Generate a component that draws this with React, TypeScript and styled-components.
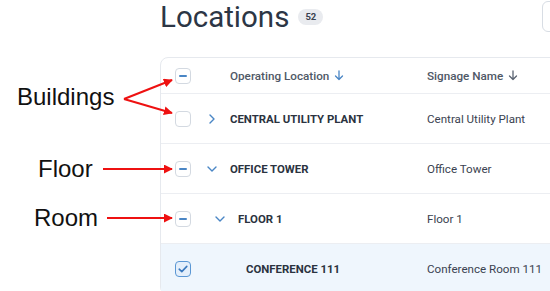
import React from "react";
import styled, { createGlobalStyle } from "styled-components";

interface LocationRow {
  id: string;
  name: string;
  signage: string;
  level: number;
  expander?: "open" | "closed";
  check: "none" | "partial" | "checked";
}

const rows: LocationRow[] = [
  { id: "cup", name: "Central Utility Plant", signage: "Central Utility Plant", level: 0, expander: "closed", check: "none" },
  { id: "ot", name: "Office Tower", signage: "Office Tower", level: 0, expander: "open", check: "partial" },
  { id: "f1", name: "Floor 1", signage: "Floor 1", level: 1, expander: "open", check: "partial" },
  { id: "c111", name: "Conference 111", signage: "Conference Room 111", level: 2, check: "checked" },
];

const GlobalStyle = createGlobalStyle`
  html, body {
    margin: 0;
    padding: 0;
    background: #ffffff;
    overflow: hidden;
  }
  body {
    font-family: Roboto, "Liberation Sans", sans-serif;
  }
`;

const Checkbox = ({ state }: { state: LocationRow["check"] }) => (
  <Box $checked={state === "checked"}>
    {state === "partial" && <Dash />}
    {state === "checked" && (
      <svg width="10" height="8" viewBox="0 0 10 8">
        <path d="M1.2 4.2 L3.8 6.6 L8.8 1.4" fill="none" stroke="#3a78bd" strokeWidth="1.6" strokeLinecap="round" strokeLinejoin="round" />
      </svg>
    )}
  </Box>
);

const Chevron = ({ open }: { open: boolean }) =>
  open ? (
    <svg width="10" height="6" viewBox="0 0 10 6">
      <path d="M1 1 L5 5 L9 1" fill="none" stroke="#4a86c5" strokeWidth="1.4" strokeLinecap="round" strokeLinejoin="round" />
    </svg>
  ) : (
    <svg width="6" height="10" viewBox="0 0 6 10">
      <path d="M1 1 L5 5 L1 9" fill="none" stroke="#4a86c5" strokeWidth="1.4" strokeLinecap="round" strokeLinejoin="round" />
    </svg>
  );

const SortArrow = ({ color }: { color: string }) => (
  <svg width="10" height="11" viewBox="0 0 10 11">
    <path d="M5 1 V9.5 M1.5 6 L5 9.5 L8.5 6" fill="none" stroke={color} strokeWidth="1.3" strokeLinecap="round" strokeLinejoin="round" />
  </svg>
);

const App = () => {
  return (
    <>
      <GlobalStyle />
      <Page>
        <Notes>
          <Note $top={83}>Buildings</Note>
          <Note $top={44} $indent={21}>Floor</Note>
          <Note $top={21} $indent={17}>Room</Note>
        </Notes>
        <Main>
          <TitleBar>
            <Title>Locations</Title>
            <Count>52</Count>
            <ToolButton />
          </TitleBar>
          <Card>
            <HeaderRow>
              <Checkbox state="partial" />
              <NameCell $level={0}>
                <ExpanderSlot />
                <HeadLabel $indent>
                  Operating Location <SortArrow color="#4a86c5" />
                </HeadLabel>
              </NameCell>
              <HeadLabel>
                Signage Name <SortArrow color="#5b6472" />
              </HeadLabel>
            </HeaderRow>
            {rows.map((row) => (
              <BodyRow key={row.id} $selected={row.check === "checked"}>
                <Checkbox state={row.check} />
                <NameCell $level={row.level}>
                  <ExpanderSlot>{row.expander && <Chevron open={row.expander === "open"} />}</ExpanderSlot>
                  <NameText>{row.name}</NameText>
                </NameCell>
                <SignageText>{row.signage}</SignageText>
              </BodyRow>
            ))}
          </Card>
        </Main>
        <Arrows width="550" height="291" viewBox="0 0 550 291">
          <defs>
            <marker id="head" viewBox="0 0 10 10" refX="9" refY="5" markerWidth="4.5" markerHeight="4.5" orient="auto">
              <path d="M0 0 L10 5 L0 10 z" fill="#ee1111" />
            </marker>
          </defs>
          <g stroke="#ee1111" strokeWidth="2" fill="none" markerEnd="url(#head)">
            <line x1="124" y1="99" x2="172" y2="80" />
            <line x1="124" y1="99" x2="172" y2="113" />
            <line x1="103" y1="169" x2="172" y2="169" />
            <line x1="107" y1="218" x2="172" y2="218" />
          </g>
        </Arrows>
      </Page>
    </>
  );
};

export default App;

const Page = styled.div`
  position: relative;
  display: flex;
  width: 550px;
  height: 291px;
  overflow: hidden;
`;

const Notes = styled.div`
  display: flex;
  flex-direction: column;
  width: 160px;
  flex-shrink: 0;
`;

const Note = styled.div<{ $top: number; $indent?: number }>`
  margin-top: ${({ $top }) => $top}px;
  padding-left: ${({ $indent }) => 17 + ($indent ?? 0)}px;
  font-family: "Liberation Sans", Arial, sans-serif;
  font-size: 24px;
  line-height: 28px;
  color: #111111;
`;

const Main = styled.div`
  width: 480px;
  flex-shrink: 0;
  display: flex;
  flex-direction: column;
`;

const TitleBar = styled.div`
  display: flex;
  align-items: center;
  height: 33px;
`;

const Title = styled.h1`
  margin: 0;
  font-size: 29.5px;
  line-height: 34px;
  font-weight: 400;
  color: #2c3645;
`;

const Count = styled.span`
  margin-left: 9px;
  width: 25px;
  height: 16px;
  border-radius: 8px;
  background: #e9ebef;
  color: #3a4250;
  font-size: 9.5px;
  font-weight: 700;
  display: flex;
  align-items: center;
  justify-content: center;
`;

const ToolButton = styled.div`
  margin-left: auto;
  width: 98px;
  height: 31px;
  box-sizing: border-box;
  border: 1px solid #d8dde4;
  border-radius: 6px;
`;

const Card = styled.div`
  margin-top: 24px;
  border: 1px solid #e6e9ee;
  border-radius: 8px;
  background: #ffffff;
`;

const rowGrid = `
  display: grid;
  grid-template-columns: 16px 212px 1fr;
  column-gap: 12px;
  align-items: center;
  padding-left: 14px;
  box-sizing: border-box;
  border-bottom: 1px solid #eceef2;
`;

const HeaderRow = styled.div`
  ${rowGrid}
  height: 36px;
`;

const BodyRow = styled.div<{ $selected?: boolean }>`
  ${rowGrid}
  height: 50px;
  background: ${({ $selected }) => ($selected ? "#eff6fd" : "#ffffff")};
`;

const Box = styled.span<{ $checked?: boolean }>`
  width: 16px;
  height: 16px;
  box-sizing: border-box;
  border-radius: 4px;
  border: ${({ $checked }) => ($checked ? "1.5px solid #5b97d4" : "1px solid #d3d9e1")};
  background: ${({ $checked }) => ($checked ? "#e4effb" : "#ffffff")};
  display: flex;
  align-items: center;
  justify-content: center;
`;

const Dash = styled.span`
  width: 8px;
  height: 2px;
  border-radius: 1px;
  background: #4a86c5;
`;

const NameCell = styled.div<{ $level: number }>`
  display: flex;
  align-items: center;
  padding-left: ${({ $level }) => $level * 8}px;
`;

const ExpanderSlot = styled.span`
  width: 18px;
  display: flex;
  justify-content: center;
  flex-shrink: 0;
`;

const HeadLabel = styled.span<{ $indent?: boolean }>`
  display: flex;
  align-items: center;
  gap: 5px;
  margin-left: ${({ $indent }) => ($indent ? 9 : 0)}px;
  font-size: 11.7px;
  font-weight: 500;
  color: #4f5866;
  white-space: nowrap;
`;

const NameText = styled.span`
  margin-left: 9px;
  font-size: 11.4px;
  font-weight: 700;
  text-transform: uppercase;
  color: #2b3340;
  white-space: nowrap;
`;

const SignageText = styled.span`
  font-size: 11.6px;
  color: #3a4250;
  white-space: nowrap;
`;

const Arrows = styled.svg`
  position: absolute;
  top: 0;
  left: 0;
  pointer-events: none;
`;
